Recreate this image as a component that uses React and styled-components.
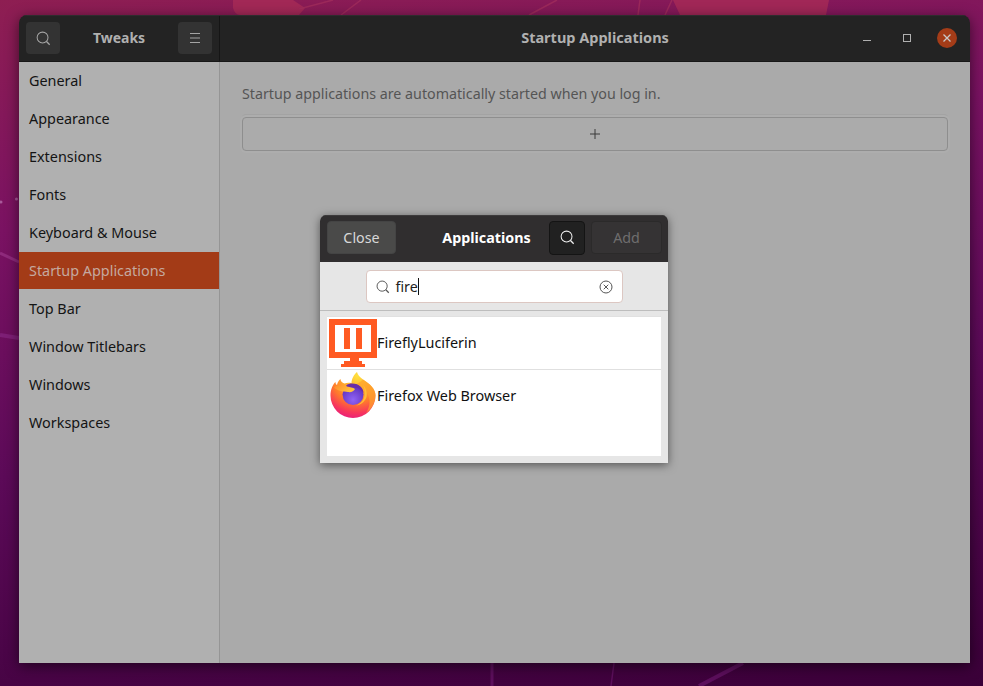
import React from "react";
import styled, { createGlobalStyle } from "styled-components";

const Global = createGlobalStyle`
  html, body { margin: 0; padding: 0; width: 983px; height: 686px; overflow: hidden; }
  body { font-family: "Noto Sans", "Open Sans", sans-serif; font-size: 14px; }
  * { box-sizing: border-box; }
`;

const Desktop = styled.div`
  position: relative;
  width: 983px;
  height: 686px;
  overflow: hidden;
  background: linear-gradient(172deg, #8e1e52 0%, #7a1262 28%, #5c0a58 58%, #3a0038 100%);
`;

const Wallpaper = styled.svg`
  position: absolute;
  inset: 0;
`;

const Window = styled.div`
  position: absolute;
  left: 19px;
  top: 15px;
  width: 951px;
  height: 648px;
  display: flex;
  flex-direction: column;
  border-radius: 8px 8px 0 0;
  overflow: hidden;
  box-shadow: 0 3px 14px rgba(0, 0, 0, 0.55);
`;

const TitleBar = styled.header`
  height: 47px;
  flex: none;
  display: flex;
  background: #232323;
  border-top: 1px solid #2f2c2e;
  border-bottom: 1px solid #171717;
  color: #b4b4b4;
`;

const LeftBar = styled.div`
  width: 201px;
  flex: none;
  display: flex;
  align-items: center;
  justify-content: space-between;
  padding: 0 7px 1px;
  border-right: 1px solid #151515;
`;

const RightBar = styled.div`
  flex: 1;
  position: relative;
  display: flex;
  align-items: center;
  justify-content: center;
  padding-bottom: 2px;
`;

const BarTitle = styled.div`
  font-weight: 700;
  font-size: ${(p) => p.$size || 14}px;
  margin-bottom: 2px;
  color: #b0b0b0;
`;

const IconButton = styled.div`
  width: 34px;
  height: 32px;
  border-radius: 4px;
  background: #333333;
  display: flex;
  align-items: center;
  justify-content: center;
  color: #a4a4a4;
`;

const Controls = styled.div`
  position: absolute;
  right: 13px;
  top: 12px;
  display: flex;
  align-items: center;
  gap: 20px;
`;

const Control = styled.div`
  width: 20px;
  height: 20px;
  display: flex;
  align-items: center;
  justify-content: center;
  border-radius: 50%;
  background: ${(p) => (p.$close ? "#a43c18" : "transparent")};
`;

const Body = styled.div`
  flex: 1;
  display: flex;
  min-height: 0;
`;

const Sidebar = styled.nav`
  width: 201px;
  flex: none;
  background: #b0b0b0;
  border-right: 1px solid #959595;
  display: flex;
  flex-direction: column;
`;

const SideItem = styled.div`
  height: 38px;
  flex: none;
  padding: 0 0 1px 10px;
  display: flex;
  align-items: center;
  font-size: 14.4px;
  border-bottom: 1px solid transparent;
  background-clip: padding-box;
  color: ${(p) => (p.$active ? "#c5a99f" : "#141414")};
  background-color: ${(p) => (p.$active ? "#a33b17" : "transparent")};
`;

const Content = styled.main`
  flex: 1;
  background: #aaaaaa;
  padding: 22px 22px 0;
`;

const Hint = styled.p`
  margin: 0;
  font-size: 14.25px;
  line-height: 20px;
  color: #555555;
`;

const AddRow = styled.div`
  margin-top: 13px;
  height: 34px;
  border: 1px solid #8e8e8e;
  border-radius: 4px;
  display: flex;
  align-items: center;
  justify-content: center;
  color: #3a3a3a;
  background: #ababab;
  box-shadow: 0 0 0 2px #adadad, 0 -3px 0 0 #a3a3a3;
`;

const Dialog = styled.div`
  position: absolute;
  left: 320px;
  top: 215px;
  width: 348px;
  height: 248px;
  display: flex;
  flex-direction: column;
  border-radius: 6px 6px 0 0;
  background: #e6e6e6;
  box-shadow: 0 2px 10px rgba(0, 0, 0, 0.5);
  overflow: hidden;
`;

const DialogBar = styled.header`
  height: 47px;
  flex: none;
  display: flex;
  align-items: center;
  padding: 0 6px 3px 7px;
  background: #302e2f;
  border-top: 1px solid #3d3b3c;
  color: #ffffff;
`;

const DialogButton = styled.div`
  height: 33px;
  width: ${(p) => p.$w}px;
  flex: none;
  display: flex;
  align-items: center;
  justify-content: center;
  border-radius: 4px;
  font-size: 14.3px;
  padding-bottom: 1px;
  background: ${(p) => (p.$disabled ? "#353334" : "#4a4a49")};
  border: 1px solid ${(p) => (p.$disabled ? "#2b2a2a" : "#444")};
  color: ${(p) => (p.$disabled ? "#6f6e6e" : "#d8d8d8")};
`;

const DialogTitle = styled.div`
  flex: 1;
  text-align: center;
  font-weight: 700;
  font-size: 14.3px;
  padding-left: 28px;
  padding-bottom: 1px;
`;

const SearchToggle = styled.div`
  width: 36px;
  height: 34px;
  flex: none;
  margin-right: 6px;
  display: flex;
  align-items: center;
  justify-content: center;
  border-radius: 4px;
  background: #212121;
  border: 1px solid #141414;
  color: #eeeeee;
`;

const SearchBar = styled.div`
  height: 49px;
  flex: none;
  display: flex;
  align-items: center;
  justify-content: center;
  padding-top: 1px;
  background: #e6e6e6;
  border-bottom: 1px solid #bdbdbd;
`;

const SearchEntry = styled.div`
  width: 257px;
  height: 33px;
  display: flex;
  align-items: center;
  padding: 0 9px;
  background: #ffffff;
  border: 1px solid #dcc7c2;
  border-radius: 4px;
  font-size: 14.3px;
  color: #222;
`;

const EntryIcon = styled.span`
  display: flex;
  color: #555555;
`;

const SearchText = styled.span`
  flex: 1;
  margin-left: 6px;
  display: flex;
  align-items: center;
`;

const Caret = styled.span`
  display: inline-block;
  width: 1px;
  height: 17px;
  background: #111;
`;

const List = styled.div`
  margin: 5px 7px 7px;
  flex: 1;
  background: #ffffff;
  border-top: 1px solid #e1e1e1;
`;

const AppRow = styled.div`
  height: 53px;
  display: flex;
  align-items: center;
  padding-left: 2px;
  font-size: 14.4px;
  color: #111;
  border-bottom: 1px solid ${(p) => (p.$sep ? "#e0e0e0" : "transparent")};
`;

const AppName = styled.span`
  margin-bottom: 2px;
`;

const AppIcon = styled.svg`
  flex: none;
  width: 48px;
  height: 48px;
`;

const SearchIcon = ({ size = 15 }) => (
  <svg width={size} height={size} viewBox="0 0 16 16" fill="none" stroke="currentColor" strokeWidth="1.1">
    <circle cx="7" cy="7" r="5.8" />
    <path d="M11.200 11.200l3.400 3.400" strokeWidth="1.4" />
  </svg>
);

const FireflyIcon = () => (
  <AppIcon viewBox="0 0 48 48">
    <g fill="#ff5a22">
      <path fillRule="evenodd" d="M0 0h48v39H0zM6 6v27h36V6z" />
      <rect x="15" y="9" width="6" height="21" />
      <rect x="27" y="9" width="6" height="21" />
      <rect x="21" y="39" width="9" height="3" />
      <rect x="15" y="42" width="18" height="3" />
      <rect x="12" y="45" width="24" height="3" />
    </g>
  </AppIcon>
);

const FirefoxIcon = () => (
  <AppIcon viewBox="0 0 48 48">
    <defs>
      <radialGradient id="ffBody" cx="0.6" cy="0.08" r="1">
        <stop offset="0" stopColor="#ffe23e" />
        <stop offset="0.3" stopColor="#ffb02e" />
        <stop offset="0.58" stopColor="#ff7a2c" />
        <stop offset="0.8" stopColor="#f8385a" />
        <stop offset="1" stopColor="#e31587" />
      </radialGradient>
      <linearGradient id="ffWing" x1="0" y1="0" x2="1" y2="0.4">
        <stop offset="0" stopColor="#ff8a2c" />
        <stop offset="1" stopColor="#ffc43a" />
      </linearGradient>
      <radialGradient id="ffGlobe" cx="0.5" cy="0.75" r="0.75">
        <stop offset="0" stopColor="#8f63f5" />
        <stop offset="1" stopColor="#5a2bb4" />
      </radialGradient>
    </defs>
    <path
      d="M1.500 23.500C1.500 18 3.500 12.500 6.500 10C6.500 11.500 7 12.500 8 13C8.500 10.500 9.500 8.500 11.500 7C11.500 9 13 11 15.500 11.500C18 10.500 20 10.500 22.500 11C22.500 7 25 2.500 28 0C28.500 3 31 5 34 7.500C41 12 46.500 17 46.500 23.500A22.500 22.500 0 0 1 1.500 23.500Z"
      fill="url(#ffBody)"
    />
    <path d="M34 7.500C41 12 46.500 17 46.500 23.500C46.500 30 43 37 37 41C41 35 42 28 38 21C36 17 31 14 28 12C30 11 32 9 34 7.500Z" fill="#ffa32c" opacity="0.7" />
    <circle cx="24" cy="22.500" r="10.500" fill="url(#ffGlobe)" />
    <path d="M17 13.500C21 10.500 28 11 32 15C33.500 16.500 34.500 19 34.500 21C32 17 28 15 25 15.500C21 16 19 15 17 13.500Z" fill="#6a2ea8" />
    <path d="M5 15.500C9 12.500 14 12.500 18 14.500C21 15.500 24 15 26 17C25 19.500 22 20.500 19 20C14.500 19.500 9 19.500 5 15.500Z" fill="url(#ffWing)" />
    <path d="M34 13C36 17 36.500 23 34.500 27C33 30 30 32.500 27 33.500C31 33 36 30 37.500 25C38.500 21 37 16 34 13Z" fill="#ffbe36" />
  </AppIcon>
);

const items = [
  "General",
  "Appearance",
  "Extensions",
  "Fonts",
  "Keyboard & Mouse",
  "Startup Applications",
  "Top Bar",
  "Window Titlebars",
  "Windows",
  "Workspaces",
];

export default function App() {
  return (
    <Desktop>
      <Global />
      <Wallpaper width="983" height="686" viewBox="0 0 983 686">
        <g fill="#a62a57" opacity="0.85">
          <path d="M233 0V8Q235 15 240 15H299L305 8L293 0Z" />
          <path d="M673 0L680 15H826L829 0Z" />
        </g>
        <g stroke="#a12d5c" strokeWidth="1.500" fill="none" opacity="0.8">
          <path d="M299 9L333 0" />
          <path d="M341 15L361 0" />
          <path d="M529 15L557 0" />
          <path d="M638 15L640 0" />
          <path d="M665 15L672 0" />
        </g>
        <g fill="#a85a9a">
          <circle cx="1" cy="202" r="1.500" />
          <circle cx="16.500" cy="199" r="1.500" />
        </g>
        <path d="M0 253L19 262" stroke="#8f2a7c" strokeWidth="3" />
        <path d="M0 335L19 338" stroke="#7e1f76" strokeWidth="4" />
        <g stroke="#5c0f5c" fill="none">
          <path d="M492 663v23" strokeWidth="3" />
          <path d="M614 663l-3 23" strokeWidth="1.500" />
          <path d="M743 663l-44 23" strokeWidth="4" />
        </g>
      </Wallpaper>

      <Window>
        <TitleBar>
          <LeftBar>
            <IconButton><SearchIcon /></IconButton>
            <BarTitle>Tweaks</BarTitle>
            <IconButton>
              <svg width="10" height="10" viewBox="0 0 10 10" stroke="currentColor" strokeWidth="1">
                <path d="M0 .5h10M0 5h10M0 9.500h10" />
              </svg>
            </IconButton>
          </LeftBar>
          <RightBar>
            <BarTitle $size={14.5}>Startup Applications</BarTitle>
            <Controls>
              <Control>
                <svg width="10" height="10" viewBox="0 0 10 10" stroke="#b0b0b0" strokeWidth="1">
                  <path d="M1 7.500h8" />
                </svg>
              </Control>
              <Control>
                <svg width="10" height="10" viewBox="0 0 10 10" fill="none" stroke="#b0b0b0" strokeWidth="1">
                  <rect x="1.500" y="1.500" width="7" height="7" />
                </svg>
              </Control>
              <Control $close>
                <svg width="10" height="10" viewBox="0 0 10 10" stroke="#c9c9c9" strokeWidth="1.300">
                  <path d="M1.500 1.500l7 7M8.500 1.500l-7 7" />
                </svg>
              </Control>
            </Controls>
          </RightBar>
        </TitleBar>
        <Body>
          <Sidebar>
            {items.map((it) => (
              <SideItem key={it} $active={it === "Startup Applications"}>{it}</SideItem>
            ))}
          </Sidebar>
          <Content>
            <Hint>Startup applications are automatically started when you log in.</Hint>
            <AddRow>
              <svg width="12" height="12" viewBox="0 0 12 12" stroke="currentColor" strokeWidth="1">
                <path d="M6 1v10M1 6h10" />
              </svg>
            </AddRow>
          </Content>
        </Body>
      </Window>

      <Dialog>
        <DialogBar>
          <DialogButton $w={69}>Close</DialogButton>
          <DialogTitle>Applications</DialogTitle>
          <SearchToggle><SearchIcon /></SearchToggle>
          <DialogButton $w={71} $disabled>Add</DialogButton>
        </DialogBar>
        <SearchBar>
          <SearchEntry>
            <EntryIcon><SearchIcon size={14} /></EntryIcon>
            <SearchText>fire<Caret /></SearchText>
            <svg width="14" height="14" viewBox="0 0 14 14" fill="none" stroke="#555" strokeWidth="1">
              <circle cx="7" cy="7" r="6" />
              <path d="M4.700 4.700l4.600 4.600M9.300 4.700l-4.600 4.600" />
            </svg>
          </SearchEntry>
        </SearchBar>
        <List>
          <AppRow $sep><FireflyIcon /><AppName>FireflyLuciferin</AppName></AppRow>
          <AppRow><FirefoxIcon /><AppName>Firefox Web Browser</AppName></AppRow>
        </List>
      </Dialog>
    </Desktop>
  );
}
